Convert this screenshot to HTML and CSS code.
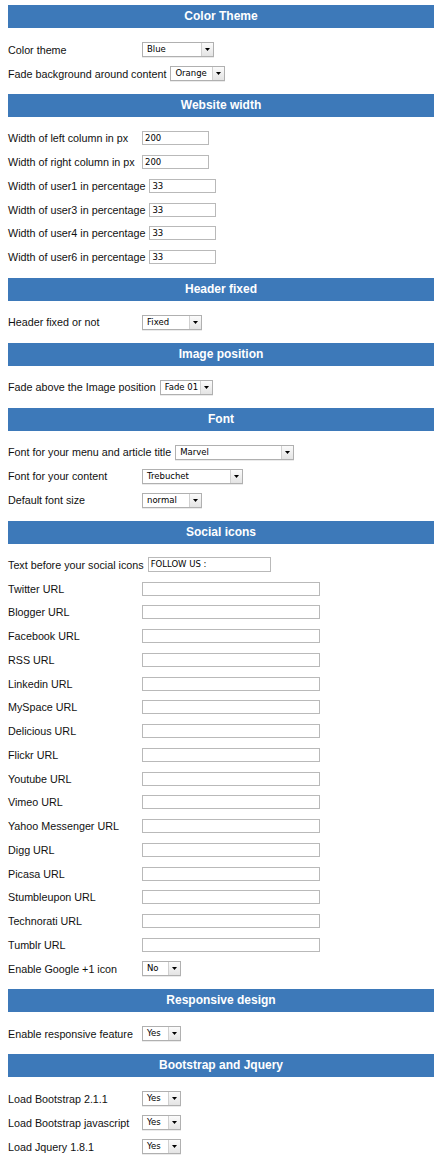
FILE: index.html
```html
<!DOCTYPE html>
<html>
<head>
<meta charset="utf-8">
<title>Template parameters</title>
<link rel="stylesheet" href="styles.css">
</head>
<body>
<div class="panel">
  <div class="title">Color Theme</div>
  <div class="rows">
    <div class="row"><span class="label">Color theme</span><span class="select w72"><span class="val">Blue</span><span class="btn"><svg width="5" height="3" viewBox="0 0 5 3"><polygon points="0,0 5,0 2.5,3"/></svg></span></span></div>
    <div class="row"><span class="label">Fade background around content</span><span class="select w55"><span class="val">Orange</span><span class="btn"><svg width="5" height="3" viewBox="0 0 5 3"><polygon points="0,0 5,0 2.5,3"/></svg></span></span></div>
  </div>

  <div class="title">Website width</div>
  <div class="rows">
    <div class="row text"><span class="label">Width of left column in px</span><span class="input w67">200</span></div>
    <div class="row text"><span class="label">Width of right column in px</span><span class="input w67">200</span></div>
    <div class="row text"><span class="label">Width of user1 in percentage</span><span class="input w67">33</span></div>
    <div class="row text"><span class="label">Width of user3 in percentage</span><span class="input w67">33</span></div>
    <div class="row text"><span class="label">Width of user4 in percentage</span><span class="input w67">33</span></div>
    <div class="row text"><span class="label">Width of user6 in percentage</span><span class="input w67">33</span></div>
  </div>

  <div class="title">Header fixed</div>
  <div class="rows">
    <div class="row"><span class="label">Header fixed or not</span><span class="select w60"><span class="val">Fixed</span><span class="btn"><svg width="5" height="3" viewBox="0 0 5 3"><polygon points="0,0 5,0 2.5,3"/></svg></span></span></div>
  </div>

  <div class="title">Image position</div>
  <div class="rows">
    <div class="row"><span class="label">Fade above the Image position</span><span class="select w53"><span class="val">Fade 01</span><span class="btn"><svg width="5" height="3" viewBox="0 0 5 3"><polygon points="0,0 5,0 2.5,3"/></svg></span></span></div>
  </div>

  <div class="title">Font</div>
  <div class="rows">
    <div class="row"><span class="label">Font for your menu and article title</span><span class="select w119"><span class="val">Marvel</span><span class="btn"><svg width="5" height="3" viewBox="0 0 5 3"><polygon points="0,0 5,0 2.5,3"/></svg></span></span></div>
    <div class="row"><span class="label">Font for your content</span><span class="select w101"><span class="val">Trebuchet</span><span class="btn"><svg width="5" height="3" viewBox="0 0 5 3"><polygon points="0,0 5,0 2.5,3"/></svg></span></span></div>
    <div class="row"><span class="label">Default font size</span><span class="select w60"><span class="val">normal</span><span class="btn"><svg width="5" height="3" viewBox="0 0 5 3"><polygon points="0,0 5,0 2.5,3"/></svg></span></span></div>
  </div>

  <div class="title">Social icons</div>
  <div class="rows">
    <div class="row text"><span class="label">Text before your social icons</span><span class="input w123 tall">FOLLOW US :</span></div>
    <div class="row text"><span class="label">Twitter URL</span><span class="input w178"></span></div>
    <div class="row text"><span class="label">Blogger URL</span><span class="input w178"></span></div>
    <div class="row text"><span class="label">Facebook URL</span><span class="input w178"></span></div>
    <div class="row text"><span class="label">RSS URL</span><span class="input w178"></span></div>
    <div class="row text"><span class="label">Linkedin URL</span><span class="input w178"></span></div>
    <div class="row text"><span class="label">MySpace URL</span><span class="input w178"></span></div>
    <div class="row text"><span class="label">Delicious URL</span><span class="input w178"></span></div>
    <div class="row text"><span class="label">Flickr URL</span><span class="input w178"></span></div>
    <div class="row text"><span class="label">Youtube URL</span><span class="input w178"></span></div>
    <div class="row text"><span class="label">Vimeo URL</span><span class="input w178"></span></div>
    <div class="row text"><span class="label">Yahoo Messenger URL</span><span class="input w178"></span></div>
    <div class="row text"><span class="label">Digg URL</span><span class="input w178"></span></div>
    <div class="row text"><span class="label">Picasa URL</span><span class="input w178"></span></div>
    <div class="row text"><span class="label">Stumbleupon URL</span><span class="input w178"></span></div>
    <div class="row text"><span class="label">Technorati URL</span><span class="input w178"></span></div>
    <div class="row text"><span class="label">Tumblr URL</span><span class="input w178"></span></div>
    <div class="row"><span class="label">Enable Google +1 icon</span><span class="select w39"><span class="val">No</span><span class="btn"><svg width="5" height="3" viewBox="0 0 5 3"><polygon points="0,0 5,0 2.5,3"/></svg></span></span></div>
  </div>

  <div class="title">Responsive design</div>
  <div class="rows">
    <div class="row"><span class="label">Enable responsive feature</span><span class="select w39"><span class="val">Yes</span><span class="btn"><svg width="5" height="3" viewBox="0 0 5 3"><polygon points="0,0 5,0 2.5,3"/></svg></span></span></div>
  </div>

  <div class="title">Bootstrap and Jquery</div>
  <div class="rows">
    <div class="row"><span class="label">Load Bootstrap 2.1.1</span><span class="select w39"><span class="val">Yes</span><span class="btn"><svg width="5" height="3" viewBox="0 0 5 3"><polygon points="0,0 5,0 2.5,3"/></svg></span></span></div>
    <div class="row"><span class="label">Load Bootstrap javascript</span><span class="select w39"><span class="val">Yes</span><span class="btn"><svg width="5" height="3" viewBox="0 0 5 3"><polygon points="0,0 5,0 2.5,3"/></svg></span></span></div>
    <div class="row"><span class="label">Load Jquery 1.8.1</span><span class="select w39"><span class="val">Yes</span><span class="btn"><svg width="5" height="3" viewBox="0 0 5 3"><polygon points="0,0 5,0 2.5,3"/></svg></span></span></div>
  </div>
</div>
</body>
</html>
```

FILE: styles.css
```css
html, body {
  margin: 0;
  padding: 0;
  background: #ffffff;
}

body {
  padding: 5px 8px;
  font-family: "Liberation Sans", Arial, Helvetica, sans-serif;
  font-size: 10.75px;
  color: #111111;
}

.panel {
  width: 426px;
}

.title {
  height: 23px;
  line-height: 23px;
  background: #3d79b9;
  color: #ffffff;
  font-weight: bold;
  font-size: 12px;
  text-align: center;
}

.rows {
  padding: 9.5px 0 8.5px;
}

.row {
  display: flex;
  align-items: center;
  height: 24px;
}

.row.text {
  height: 23.75px;
}

.label {
  min-width: 130px;
  margin-right: 4px;
  white-space: nowrap;
}

.input {
  box-sizing: border-box;
  height: 14px;
  border: 1px solid #b9b9b9;
  background: #ffffff;
  padding-left: 2px;
  font-family: "DejaVu Sans", Verdana, sans-serif;
  font-size: 8.5px;
  line-height: 12px;
  color: #000000;
  white-space: nowrap;
}

.input.tall {
  height: 15px;
  line-height: 13px;
}

.select {
  box-sizing: border-box;
  display: flex;
  height: 15px;
  border: 1px solid #b0b0b0;
  box-shadow: 0 1px 0 rgba(0, 0, 0, 0.08);
  background: #ffffff;
  font-family: "DejaVu Sans", Verdana, sans-serif;
  font-size: 8.5px;
  line-height: 13px;
  color: #000000;
}

.select .val {
  flex: 1;
  padding-left: 4px;
  white-space: nowrap;
  overflow: hidden;
}

.select .btn {
  width: 11px;
  flex: none;
  display: flex;
  align-items: center;
  justify-content: center;
  border-left: 1px solid #d0d0d0;
  background: linear-gradient(#fbfbfb, #e4e4e4);
}

.select .btn svg {
  display: block;
  fill: #000000;
}

.w39 { width: 39px; }
.w53 { width: 53px; }
.w55 { width: 55px; }
.w60 { width: 60px; }
.w67 { width: 67px; }
.w72 { width: 72px; }
.w101 { width: 101px; }
.w119 { width: 119px; }
.w123 { width: 123px; }
.w178 { width: 178px; }
```
